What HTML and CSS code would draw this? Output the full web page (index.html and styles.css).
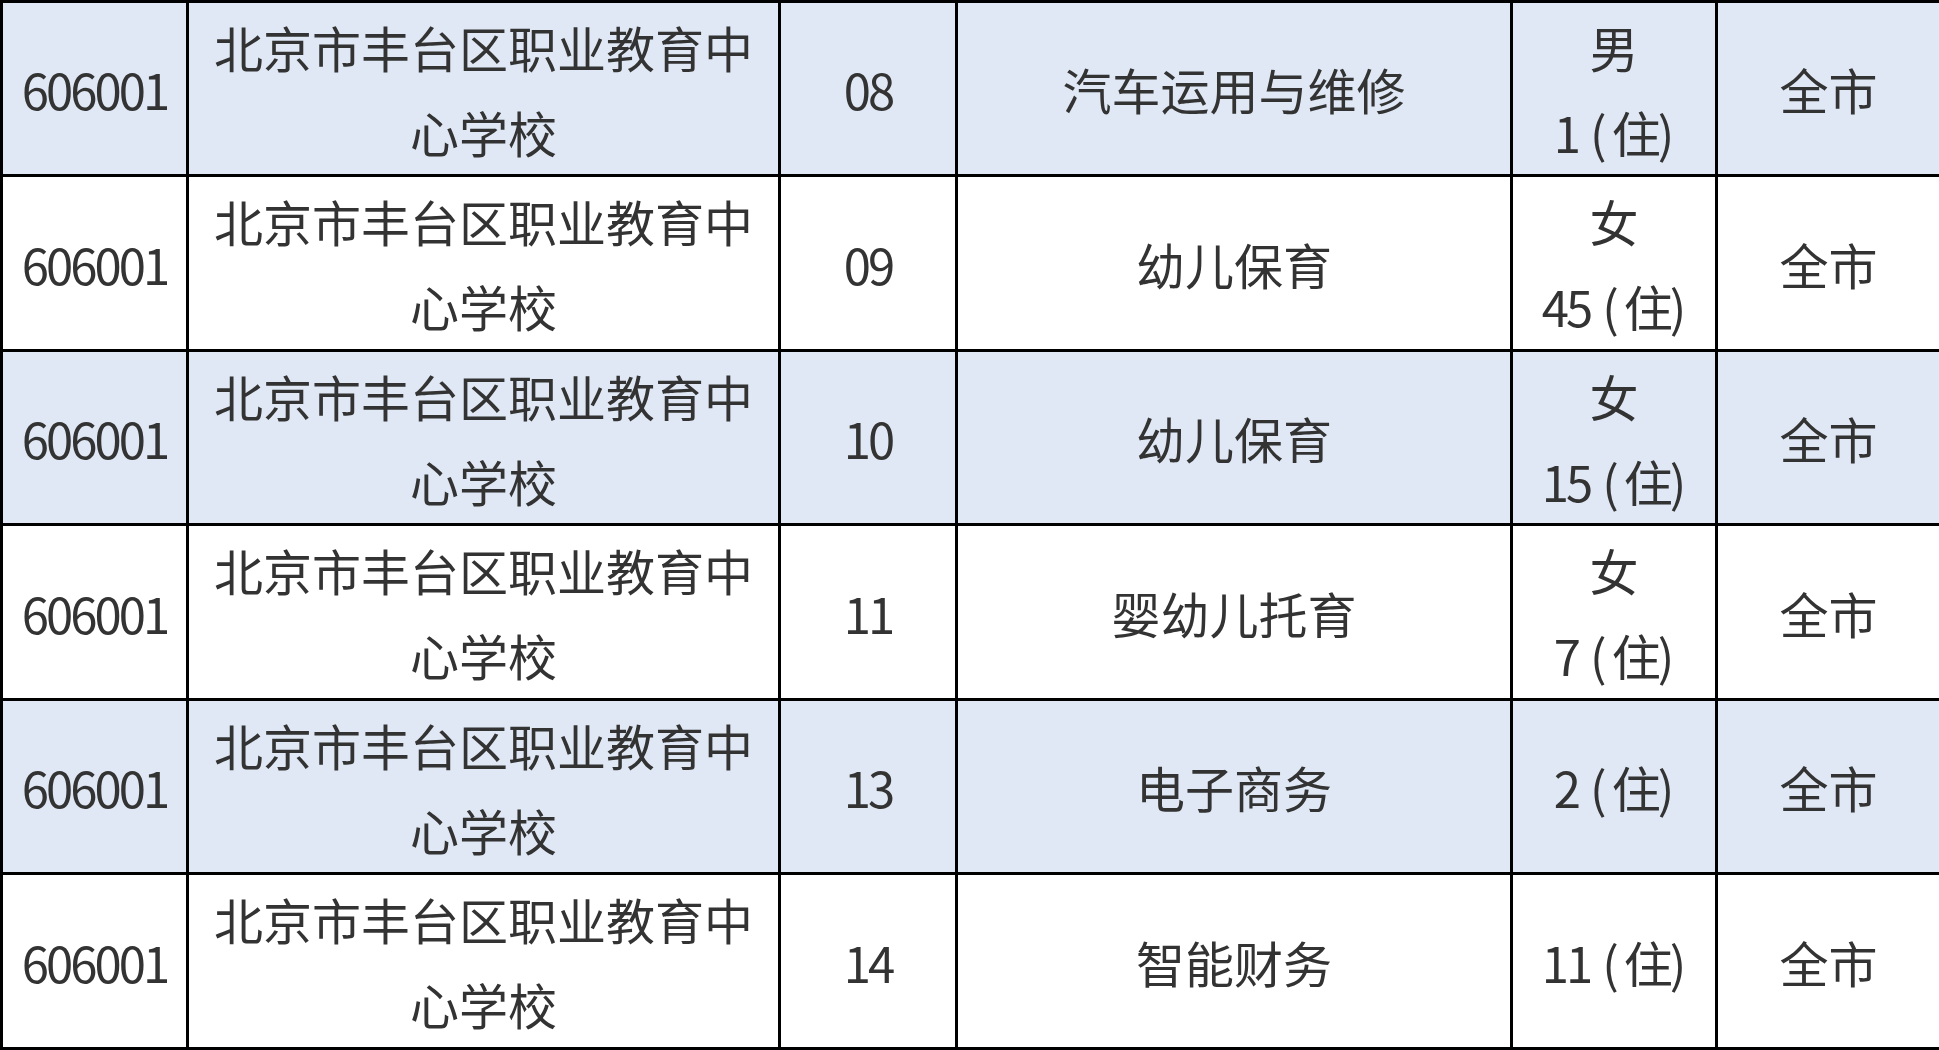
FILE: index.html
```html
<!DOCTYPE html>
<html lang="zh-CN">
<head>
<meta charset="utf-8">
<title>北京市丰台区职业教育中心学校</title>
<link rel="stylesheet" href="styles.css">
</head>
<body>
<table class="plan">
  <colgroup>
    <col class="c-code">
    <col class="c-school">
    <col class="c-major-code">
    <col class="c-major">
    <col class="c-count">
    <col class="c-area">
  </colgroup>
  <tbody>
    <tr class="shade">
      <td><span class="num">606001</span></td>
      <td>北京市丰台区职业教育中<br>心学校</td>
      <td><span class="num">08</span></td>
      <td>汽车运用与维修</td>
      <td>男<br><span class="num">1</span><span class="lp">(</span>住<span class="rp">)</span></td>
      <td>全市</td>
    </tr>
    <tr>
      <td><span class="num">606001</span></td>
      <td>北京市丰台区职业教育中<br>心学校</td>
      <td><span class="num">09</span></td>
      <td>幼儿保育</td>
      <td>女<br><span class="num">45</span><span class="lp">(</span>住<span class="rp">)</span></td>
      <td>全市</td>
    </tr>
    <tr class="shade">
      <td><span class="num">606001</span></td>
      <td>北京市丰台区职业教育中<br>心学校</td>
      <td><span class="num">10</span></td>
      <td>幼儿保育</td>
      <td>女<br><span class="num">15</span><span class="lp">(</span>住<span class="rp">)</span></td>
      <td>全市</td>
    </tr>
    <tr>
      <td><span class="num">606001</span></td>
      <td>北京市丰台区职业教育中<br>心学校</td>
      <td><span class="num">11</span></td>
      <td>婴幼儿托育</td>
      <td>女<br><span class="num">7</span><span class="lp">(</span>住<span class="rp">)</span></td>
      <td>全市</td>
    </tr>
    <tr class="shade">
      <td><span class="num">606001</span></td>
      <td>北京市丰台区职业教育中<br>心学校</td>
      <td><span class="num">13</span></td>
      <td>电子商务</td>
      <td><span class="num">2</span><span class="lp">(</span>住<span class="rp">)</span></td>
      <td>全市</td>
    </tr>
    <tr>
      <td><span class="num">606001</span></td>
      <td>北京市丰台区职业教育中<br>心学校</td>
      <td><span class="num">14</span></td>
      <td>智能财务</td>
      <td><span class="num">11</span><span class="lp">(</span>住<span class="rp">)</span></td>
      <td>全市</td>
    </tr>
  </tbody>
</table>
</body>
</html>
```

FILE: styles.css
```css
html, body {
  margin: 0;
  padding: 0;
  background: #ffffff;
}

.plan {
  border-collapse: collapse;
  table-layout: fixed;
  width: 1939px;
  font-family: "Noto Sans CJK SC", "Noto Sans", sans-serif;
  font-size: 49px;
  color: #333333;
}

.c-code { width: 186px; }
.c-school { width: 592px; }
.c-major-code { width: 177px; }
.c-major { width: 555px; }
.c-count { width: 205px; }
.c-area { width: 224px; }

.plan td {
  border: 3px solid #000000;
  height: 171px;
  padding: 0;
  text-align: center;
  vertical-align: middle;
  line-height: 85px;
  white-space: nowrap;
  overflow: hidden;
}

.plan tr:nth-child(even) td {
  height: 172px;
}

.plan tr.shade td {
  background: #dfe8f4;
}

.num {
  letter-spacing: -0.06em;
}

.lp {
  margin: 0 5px 0 12px;
}

.rp {
  margin-left: -3px;
}
```
